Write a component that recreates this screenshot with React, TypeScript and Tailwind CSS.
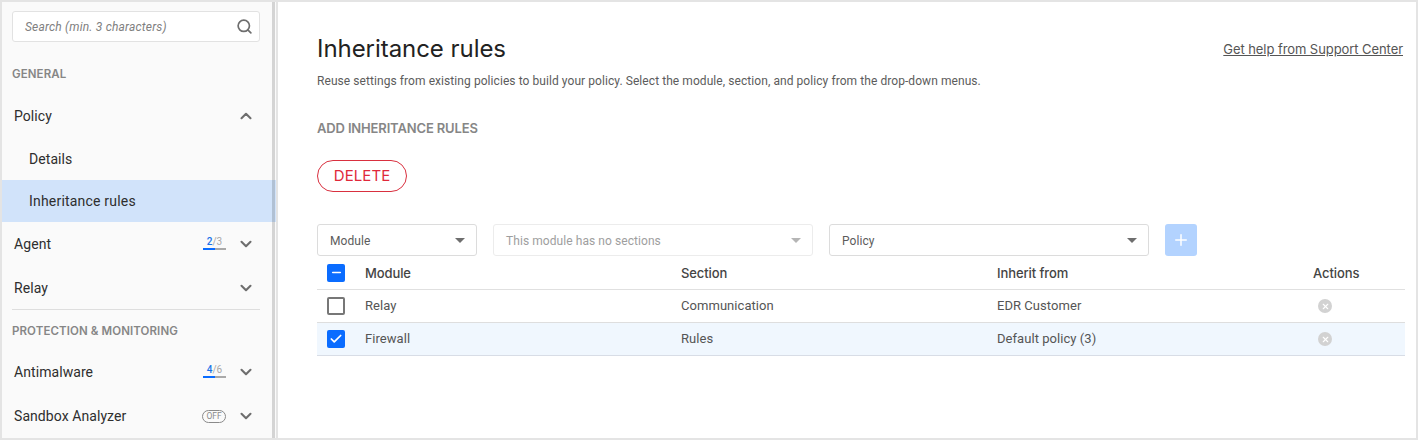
import React from "react";
import { ChevronDown, ChevronUp, Search, Plus, Check, Minus, X } from "lucide-react";

const body = "font-['Roboto','Liberation_Sans',sans-serif] tracking-[0.07px]";
const heading = "font-['Inter','Liberation_Sans',sans-serif]";

function Progress({ done, total }: { done: number; total: number }) {
  return (
    <div className="flex flex-col items-center w-[23px] mr-[11px] mt-[-2px]">
      <div className="text-[10px] leading-[10px] tracking-normal text-[#a8a8a8]">
        <span className="text-[#1a73e8] font-medium">{done}</span>/{total}
      </div>
      <div className="flex w-full h-[2px] mt-[1px] bg-[#a9a9a9]">
        <div className="w-[12px] h-full bg-[#0a6cff]" />
      </div>
    </div>
  );
}

function NavRow({ label, children, open }: { label: string; children?: React.ReactNode; open?: boolean }) {
  return (
    <div className="flex items-center h-[44px] pl-[12px] pr-[21px] text-[14px] text-[#2e2e2e]">
      <span className="flex-1">{label}</span>
      {children}
      {open ? (
        <ChevronUp size={18} strokeWidth={2.8} className="text-[#6e6e6e]" />
      ) : (
        <ChevronDown size={18} strokeWidth={2.8} className="text-[#6e6e6e]" />
      )}
    </div>
  );
}

function SectionLabel({ children, className }: { children: React.ReactNode; className: string }) {
  return (
    <div className={`${heading} text-[11.5px] tracking-[0.1px] font-semibold text-[#868686] pl-[10px] flex items-center ${className}`}>
      {children}
    </div>
  );
}

function Select({ label, width, disabled }: { label: string; width: string; disabled?: boolean }) {
  return (
    <div
      className={`flex items-center justify-between h-[32px] ${width} border rounded-[3px] pl-[12px] pr-[11px] text-[12px] ${
        disabled ? "border-[#ececec] text-[#9e9e9e]" : "border-[#dcdcdc] text-[#5c5c5c]"
      }`}
    >
      <span className="mt-[1px]">{label}</span>
      <span
        className={`w-0 h-0 border-l-[5px] border-r-[5px] border-t-[5px] border-l-transparent border-r-transparent ${
          disabled ? "border-t-[#b5b5b5]" : "border-t-[#6e6e6e]"
        }`}
      />
    </div>
  );
}

function RemoveIcon() {
  return (
    <div className="w-[14px] h-[14px] rounded-full bg-[#d2d2d2] flex items-center justify-center ml-[5px]">
      <X size={9} strokeWidth={3} className="text-white" />
    </div>
  );
}

const rowGrid = "grid grid-cols-[48px_316px_316px_316px_1fr] items-center";
const headCell = `${heading} font-medium tracking-[-0.1px] text-[#444444] pt-[2px]`;

export default function App() {
  return (
    <div className={`${body} w-[1418px] h-[440px] bg-white border-2 border-[#e4e4e4] flex overflow-hidden`}>
      <aside className="relative w-[274px] shrink-0 bg-[#fafafa]">
        <div className="pt-[9px] pl-[10px] pr-[16px]">
          <div className="flex items-center justify-between h-[31px] bg-white border border-[#e2e2e2] rounded-[3px] pl-[12px] pr-[6px]">
            <span className="italic text-[12px] tracking-[0.2px] text-[#808080]">Search (min. 3 characters)</span>
            <Search size={17} strokeWidth={2.4} className="text-[#6e6e6e]" />
          </div>
        </div>
        <SectionLabel className="h-[52px] pt-[14px]">GENERAL</SectionLabel>
        <NavRow label="Policy" open />
        <div className="flex items-center h-[42px] pl-[27px] text-[14px] text-[#2e2e2e]">Details</div>
        <div className="flex items-center h-[42px] pl-[27px] text-[14px] tracking-[0.2px] text-[#2e2e2e] bg-[#d1e3fa]">Inheritance rules</div>
        <NavRow label="Agent">
          <Progress done={2} total={3} />
        </NavRow>
        <NavRow label="Relay" />
        <div className="ml-[10px] mr-[16px] border-t border-[#dedede] mt-[-1px]" />
        <SectionLabel className="h-[40px] pt-[3px]">PROTECTION &amp; MONITORING</SectionLabel>
        <NavRow label="Antimalware">
          <Progress done={4} total={6} />
        </NavRow>
        <NavRow label="Sandbox Analyzer">
          <span className="flex items-center justify-center w-[24px] h-[13px] mr-[11px] border border-[#8a8a8a] rounded-full text-[8.5px] tracking-normal text-[#8a8a8a]">
            OFF
          </span>
        </NavRow>
        {/* scrollbar thumb sits over the panel */}
        <div className="absolute top-0 bottom-0 left-[269.5px] w-[3px] bg-black/15" />
      </aside>

      <main className="flex-1 border-l-2 border-[#e4e4e4] pl-[39px] pr-[11px] min-w-0">
        <div className="flex items-center justify-between pt-[31px] h-[63px]">
          <h1 className={`${heading} text-[24px] tracking-[-0.05px] text-[#222222]`}>Inheritance rules</h1>
          <a className={`${heading} text-[13px] tracking-[-0.07px] text-[#555555] underline mr-[2px] mt-[1px]`}>Get help from Support Center</a>
        </div>
        <p className="text-[12px] leading-[16px] mt-[8px] text-[#5c5c5c]">
          Reuse settings from existing policies to build your policy. Select the module, section, and policy from the
          drop-down menus.
        </p>
        <div className={`${heading} text-[13px] tracking-[-0.15px] font-semibold leading-[16px] mt-[31px] text-[#868686]`}>ADD INHERITANCE RULES</div>
        <button className={`${heading} block mt-[24px] w-[90px] h-[32px] rounded-full border border-[#d9303f] text-[15px] text-[#e0283a]`}>
          DELETE
        </button>
        <div className="flex gap-[16px] mt-[32px]">
          <Select label="Module" width="w-[160px]" />
          <Select label="This module has no sections" width="w-[320px]" disabled />
          <Select label="Policy" width="w-[320px]" />
          <button className="flex items-center justify-center w-[32px] h-[32px] rounded-[3px] bg-[#b3d3ff]">
            <Plus size={18} strokeWidth={2} className="text-white" />
          </button>
        </div>
        <div className="text-[13px] tracking-[0.05px] text-[#555555]">
          <div className={`${rowGrid} h-[34px] border-b border-[#e0e0e0]`}>
            <div className="w-[18px] h-[18px] ml-[10px] rounded-[2px] bg-[#0a6cff] flex items-center justify-center">
              <Minus size={13} strokeWidth={3} className="text-white" />
            </div>
            <span className={headCell}>Module</span>
            <span className={headCell}>Section</span>
            <span className={headCell}>Inherit from</span>
            <span className={headCell}>Actions</span>
          </div>
          <div className={`${rowGrid} h-[33px] border-b border-[#dedede]`}>
            <div className="w-[18px] h-[18px] ml-[10px] rounded-[2px] border-2 border-[#777777]" />
            <span>Relay</span>
            <span>Communication</span>
            <span>EDR Customer</span>
            <RemoveIcon />
          </div>
          <div className={`${rowGrid} h-[33px] border-b border-[#d8dde6] bg-[#f0f7fe]`}>
            <div className="w-[18px] h-[18px] ml-[10px] rounded-[2px] bg-[#0a6cff] flex items-center justify-center">
              <Check size={14} strokeWidth={3} className="text-white" />
            </div>
            <span>Firewall</span>
            <span>Rules</span>
            <span>Default policy (3)</span>
            <RemoveIcon />
          </div>
        </div>
      </main>
    </div>
  );
}
